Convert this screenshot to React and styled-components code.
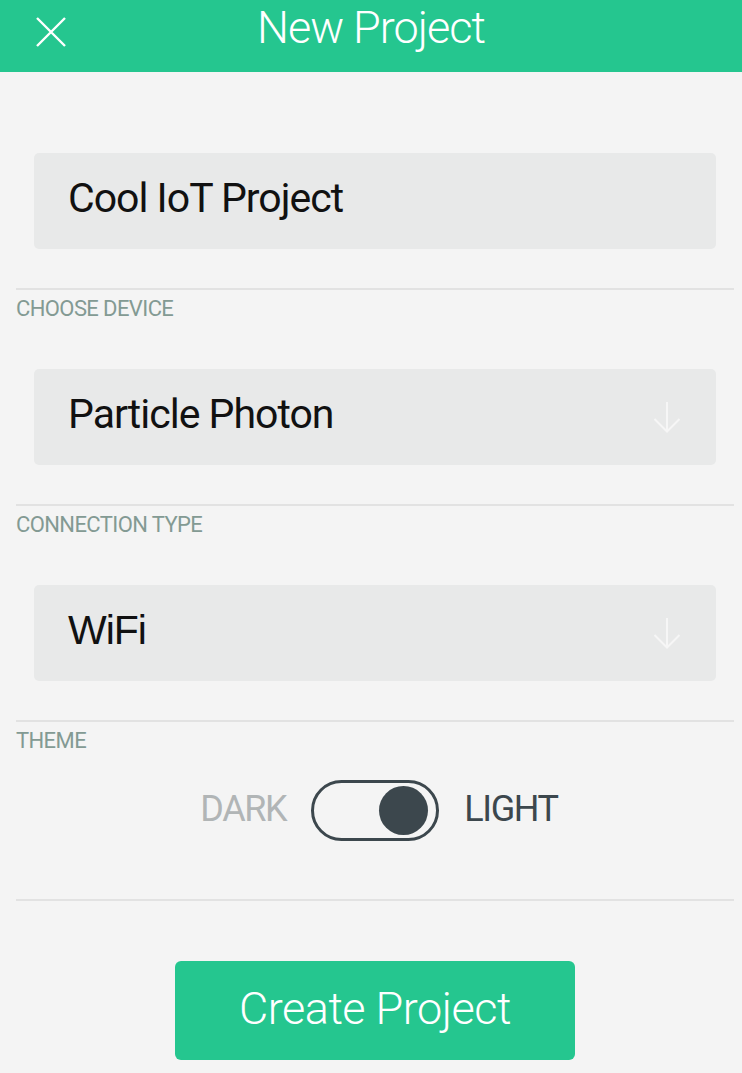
import styled, { createGlobalStyle } from 'styled-components';

const GlobalStyle = createGlobalStyle`
	html, body {
		margin: 0;
		padding: 0;
		background: #f4f4f4;
	}
	body {
		font-family: Roboto, 'Liberation Sans', sans-serif;
		-webkit-font-smoothing: antialiased;
	}
`;

const GREEN = '#25c68f';

const CloseIcon = () => (
	<svg width='30' height='30' viewBox='0 0 30 30' fill='none'>
		<path d='M1 1 L29 29 M29 1 L1 29' stroke='#fff' strokeWidth='2.4' />
	</svg>
);

const ArrowIcon = () => (
	<svg width='28' height='32' viewBox='0 0 28 32' fill='none'>
		<path
			d='M14 1 V30 M1.5 18 L14 30.5 L26.5 18'
			stroke='#f6f6f6'
			strokeWidth='2'
		/>
	</svg>
);

const Field = ({ value, select, font }) => (
	<FieldBox>
		<FieldText $font={font}>{value}</FieldText>
		{select && <ArrowIcon />}
	</FieldBox>
);

const App = () => {
	return (
		<Page>
			<GlobalStyle />
			<Header>
				<CloseButton>
					<CloseIcon />
				</CloseButton>
				<Title>New Project</Title>
				<span />
			</Header>
			<Form>
				<FirstField>
					<Field value='Cool IoT Project' />
				</FirstField>
				<Section>
					<Label>CHOOSE DEVICE</Label>
					<Field value='Particle Photon' select />
				</Section>
				<Section>
					<Label>CONNECTION TYPE</Label>
					<Field value='WiFi' select font="'Liberation Sans', Arial, sans-serif" />
				</Section>
				<ThemeSection>
					<Label>THEME</Label>
					<ToggleRow>
						<ToggleText>DARK</ToggleText>
						<Switch $on>
							<Knob />
						</Switch>
						<ToggleText $active>LIGHT</ToggleText>
					</ToggleRow>
				</ThemeSection>
			</Form>
			<Footer>
				<CreateButton>Create Project</CreateButton>
			</Footer>
		</Page>
	);
};

export default App;

const Page = styled.div`
	min-height: 1073px;
	background: #f4f4f4;
`;
const Header = styled.header`
	height: 72px;
	background: ${GREEN};
	display: grid;
	grid-template-columns: 1fr auto 1fr;
	align-items: center;
`;
const CloseButton = styled.button`
	justify-self: start;
	align-self: start;
	margin: 17px 0 0 36px;
	padding: 0;
	border: none;
	background: transparent;
	display: flex;
`;
const Title = styled.h1`
	margin: 0;
	color: #fff;
	font-weight: 300;
	font-size: 45px;
	letter-spacing: -1px;
	line-height: 1;
	margin-top: -18px;
`;
const Form = styled.div`
	padding: 0 8px 0 16px;
`;
const FirstField = styled.div`
	padding: 81px 0 39px;
	border-bottom: 2px solid #e2e2e2;
`;
const Section = styled.div`
	padding-top: 8px;
	padding-bottom: 39px;
	border-bottom: 2px solid #e2e2e2;
`;
const ThemeSection = styled(Section)`
	padding-bottom: 58px;
`;
const Label = styled.div`
	font-size: 22px;
	line-height: 22px;
	color: #839a93;
	letter-spacing: -0.6px;
	height: 22px;
	margin-bottom: 49px;
	${ThemeSection} & {
		margin-bottom: 28px;
	}
`;
const FieldBox = styled.div`
	margin: 0 18px;
	height: 96px;
	border-radius: 5px;
	background: #e8e9e9;
	display: flex;
	align-items: center;
	justify-content: space-between;
	padding: 0 35px 0 34px;
	box-sizing: border-box;
`;
const FieldText = styled.span`
	font-family: ${(p) => p.$font || "Roboto, 'Liberation Sans', sans-serif"};
	font-size: 41px;
	color: #111;
	letter-spacing: -1px;
	margin-top: -6px;
`;
const ToggleRow = styled.div`
	display: flex;
	justify-content: center;
	align-items: center;
	gap: 25px;
	padding-left: 8px;
`;
const ToggleText = styled.span`
	font-size: 36px;
	letter-spacing: -1.4px;
	margin-top: -4px;
	color: ${(p) => (p.$active ? '#3c474d' : '#b1b5b6')};
`;
const Switch = styled.div`
	width: 128px;
	height: 61px;
	box-sizing: border-box;
	border: 3px solid #3c474d;
	border-radius: 31px;
	display: flex;
	align-items: center;
	justify-content: ${(p) => (p.$on ? 'flex-end' : 'flex-start')};
	padding: 0 8px;
`;
const Knob = styled.div`
	width: 49px;
	height: 49px;
	border-radius: 50%;
	background: #3c474d;
`;
const Footer = styled.div`
	display: flex;
	justify-content: center;
	padding: 60px 0 0 8px;
`;
const CreateButton = styled.button`
	width: 400px;
	height: 99px;
	border: none;
	border-radius: 6px;
	background: ${GREEN};
	color: #fff;
	font-family: Roboto, 'Liberation Sans', sans-serif;
	font-weight: 300;
	font-size: 45px;
	letter-spacing: -0.5px;
	padding: 0 0 4px;
`;
